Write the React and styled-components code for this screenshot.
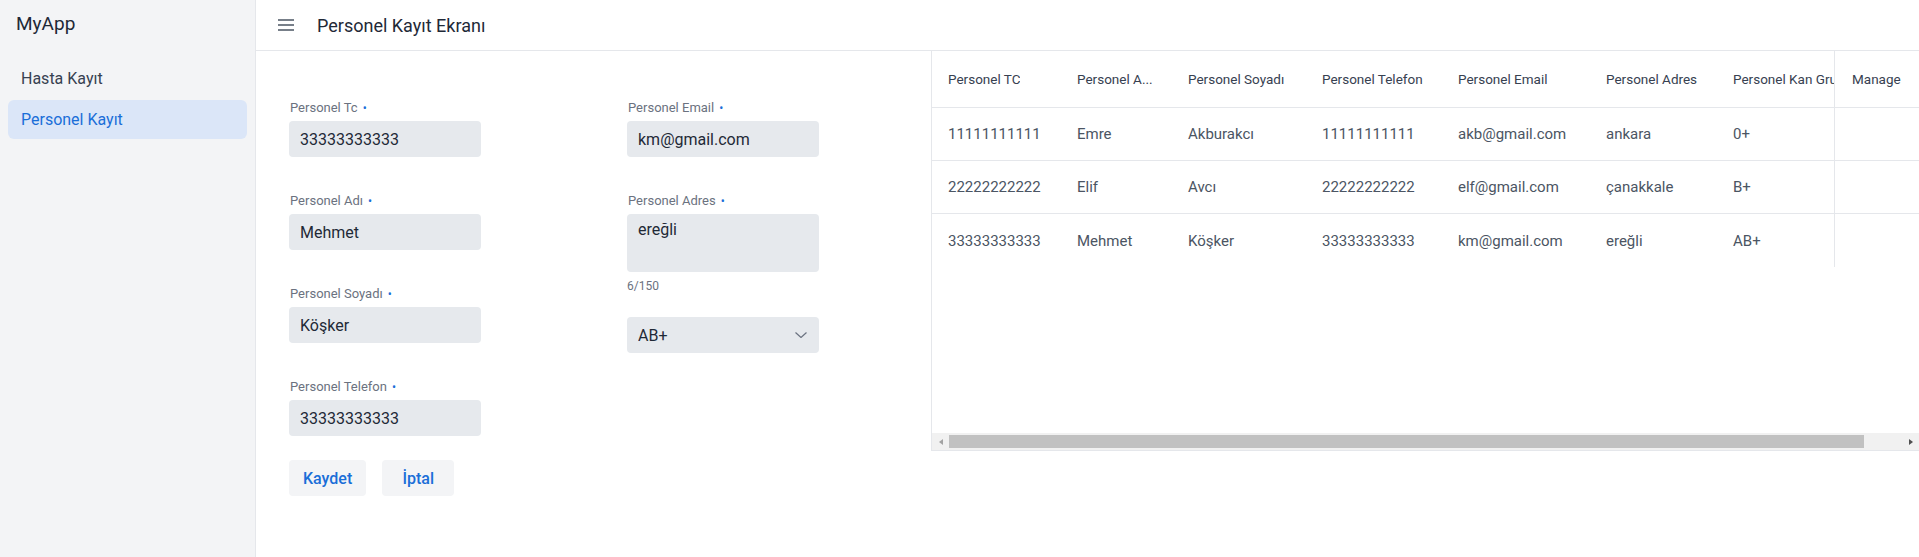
import styled, { createGlobalStyle } from "styled-components";

const GlobalStyle = createGlobalStyle`
  html, body {
    margin: 0;
    padding: 0;
    background: #fff;
  }
  body {
    font-family: Roboto, "Liberation Sans", sans-serif;
    color: #1f2937;
  }
  * {
    box-sizing: border-box;
  }
`;

const Layout = styled.div`
  display: flex;
  height: 100vh;
`;

const Sidebar = styled.aside`
  width: 256px;
  flex-shrink: 0;
  background: #f3f4f6;
  border-right: 1px solid #e5e7eb;
`;

const Brand = styled.div`
  height: 46px;
  display: flex;
  align-items: center;
  padding-left: 16px;
  font-size: 19px;
  color: #1f2937;
`;

const Nav = styled.nav`
  display: flex;
  flex-direction: column;
  gap: 2px;
  padding: 13px 8px;
`;

const NavItem = styled.a`
  height: 39px;
  display: flex;
  align-items: center;
  padding: 0 13px;
  border-radius: 6px;
  font-size: 16px;
  text-decoration: none;
  color: ${(p) => (p.$active ? "#1a6ed8" : "#374151")};
  background: ${(p) => (p.$active ? "#dbe6f8" : "transparent")};
`;

const Main = styled.div`
  flex: 1;
  display: flex;
  flex-direction: column;
  min-width: 0;
`;

const Header = styled.header`
  height: 51px;
  flex-shrink: 0;
  display: flex;
  align-items: center;
  gap: 23px;
  padding-left: 22px;
  border-bottom: 1px solid #e5e7eb;
`;

const Title = styled.h1`
  margin: 0;
  font-size: 18px;
  font-weight: 400;
  color: #1f2937;
`;

const Content = styled.div`
  flex: 1;
  display: flex;
  align-items: flex-start;
  min-height: 0;
`;

const FormArea = styled.form`
  width: 675px;
  flex-shrink: 0;
  padding: 48px 0 0 33px;
`;

const Columns = styled.div`
  display: grid;
  grid-template-columns: 192px 192px;
  column-gap: 146px;
  align-items: start;
`;

const Column = styled.div`
  display: flex;
  flex-direction: column;
`;

const Field = styled.div`
  display: flex;
  flex-direction: column;
  margin-bottom: ${(p) => p.$mb ?? 35}px;
`;

const Label = styled.label`
  display: block;
  height: 17px;
  font-size: 13px;
  line-height: 17px;
  color: #6b7280;
  margin-bottom: 5px;
  padding-left: 1px;
  overflow: hidden;
  &::after {
    content: "•";
    color: #1a6ed8;
    font-size: 12px;
    line-height: 0;
    margin-left: 5px;
  }
`;

const Input = styled.input`
  height: 36px;
  width: 192px;
  border: none;
  border-radius: 4px;
  background: #e6e9ed;
  padding: 0 11px;
  font-family: inherit;
  font-size: 16px;
  color: #1f2937;
  &:focus {
    outline: none;
  }
`;

const TextArea = styled.textarea`
  display: block;
  height: 58px;
  width: 192px;
  border: none;
  border-radius: 4px;
  background: #e6e9ed;
  padding: 6px 11px;
  font-family: inherit;
  font-size: 16px;
  color: #1f2937;
  resize: none;
  &:focus {
    outline: none;
  }
`;

const Counter = styled.div`
  margin-top: 7px;
  font-size: 12px;
  line-height: 14px;
  color: #6b7280;
`;

const SelectBox = styled.div`
  position: relative;
  width: 192px;
  height: 36px;
  margin-top: 24px;
  select {
    appearance: none;
    width: 100%;
    height: 100%;
    border: none;
    border-radius: 4px;
    background: #e6e9ed;
    padding: 0 11px;
    font-family: inherit;
    font-size: 16px;
    color: #1f2937;
  }
  svg {
    position: absolute;
    right: 12px;
    top: 15px;
    pointer-events: none;
  }
`;

const Actions = styled.div`
  display: flex;
  gap: 16px;
  margin-top: -11px;
`;

const Button = styled.button`
  height: 36px;
  min-width: 72px;
  padding: 0 14px;
  border: none;
  border-radius: 4px;
  background: #f3f4f6;
  color: #1a6ed8;
  font-family: inherit;
  font-size: 16px;
  font-weight: 500;
  cursor: pointer;
`;

const TableWrap = styled.div`
  flex: 1;
  min-width: 0;
  height: 400px;
  display: flex;
  flex-direction: column;
  border-left: 1px solid #e5e7eb;
  border-bottom: 1px solid #e5e7eb;
`;

const Viewport = styled.div`
  flex: 1;
  overflow: hidden;
`;

const ScrollBar = styled.div`
  height: 17px;
  flex-shrink: 0;
  display: flex;
  background: #f1f1f1;
`;

const ScrollArrow = styled.div`
  width: 17px;
  display: flex;
  align-items: center;
  justify-content: center;
  &::before {
    content: "";
    border-top: 3.5px solid transparent;
    border-bottom: 3.5px solid transparent;
    ${(p) =>
      p.$dir === "left"
        ? "border-right: 4px solid #a3a3a3;"
        : "border-left: 4px solid #505050;"}
  }
`;

const ScrollTrack = styled.div`
  flex: 1;
  padding: 2px 0;
`;

const ScrollThumb = styled.div`
  height: 100%;
  width: ${(p) => p.$size}%;
  background: #c1c1c1;
`;

const Table = styled.table`
  border-collapse: separate;
  border-spacing: 0;
  table-layout: fixed;
  width: 1033px;
`;

const Th = styled.th`
  height: 57px;
  padding: 0 16px;
  text-align: left;
  font-size: 13.5px;
  font-weight: 400;
  color: #374151;
  white-space: nowrap;
  overflow: hidden;
  border-bottom: 1px solid #e5e7eb;
`;

const HeadText = styled.span`
  display: flex;
  ${(p) =>
    p.$cut &&
    `
    &::after {
      content: "...";
    }
  `}
`;

const HeadClip = styled.span`
  display: block;
  overflow: hidden;
  max-width: ${(p) => (p.$cut ? `${p.$cut}px` : "none")};
`;

const Td = styled.td`
  height: 53px;
  padding: 0 16px;
  font-size: 15px;
  color: #4b5563;
  white-space: nowrap;
  overflow: hidden;
  border-bottom: 1px solid #e5e7eb;
  tr:last-child > & {
    border-bottom: none;
  }
`;

const StickyTh = styled(Th)`
  position: sticky;
  right: 0;
  background: #fff;
  border-left: 1px solid #e5e7eb;
  padding-left: 17px;
`;

const StickyTd = styled(Td)`
  position: sticky;
  right: 0;
  background: #fff;
  border-left: 1px solid #e5e7eb;
`;

const columns = [
  { key: "tc", title: "Personel TC", width: 129 },
  { key: "ad", title: "Personel Adı", width: 111, cut: 65 },
  { key: "soyad", title: "Personel Soyadı", width: 134 },
  { key: "tel", title: "Personel Telefon", width: 136 },
  { key: "email", title: "Personel Email", width: 148 },
  { key: "adres", title: "Personel Adres", width: 127 },
  { key: "kan", title: "Personel Kan Grubu", width: 163 },
];

const rows = [
  { tc: "11111111111", ad: "Emre", soyad: "Akburakcı", tel: "11111111111", email: "akb@gmail.com", adres: "ankara", kan: "0+" },
  { tc: "22222222222", ad: "Elif", soyad: "Avcı", tel: "22222222222", email: "elf@gmail.com", adres: "çanakkale", kan: "B+" },
  { tc: "33333333333", ad: "Mehmet", soyad: "Köşker", tel: "33333333333", email: "km@gmail.com", adres: "ereğli", kan: "AB+" },
];

function MenuIcon() {
  return (
    <svg width="16" height="12" viewBox="0 0 16 12" fill="none">
      <path d="M0 1h16M0 6h16M0 11h16" stroke="#4b5563" strokeWidth="1.4" />
    </svg>
  );
}

function ChevronDown() {
  return (
    <svg width="12" height="6" viewBox="0 0 12 6" fill="none">
      <path d="M0.5 0.5l5.5 5 5.5-5" stroke="#6b7280" strokeWidth="1.2" />
    </svg>
  );
}

export default function App() {
  return (
    <>
      <GlobalStyle />
      <Layout>
        <Sidebar>
          <Brand>MyApp</Brand>
          <Nav>
            <NavItem href="#">Hasta Kayıt</NavItem>
            <NavItem href="#" $active>
              Personel Kayıt
            </NavItem>
          </Nav>
        </Sidebar>

        <Main>
          <Header>
            <MenuIcon />
            <Title>Personel Kayıt Ekranı</Title>
          </Header>

          <Content>
            <FormArea onSubmit={(e) => e.preventDefault()}>
              <Columns>
                <Column>
                  <Field>
                    <Label>Personel Tc</Label>
                    <Input defaultValue="33333333333" />
                  </Field>
                  <Field>
                    <Label>Personel Adı</Label>
                    <Input defaultValue="Mehmet" />
                  </Field>
                  <Field>
                    <Label>Personel Soyadı</Label>
                    <Input defaultValue="Köşker" />
                  </Field>
                  <Field>
                    <Label>Personel Telefon</Label>
                    <Input defaultValue="33333333333" />
                  </Field>
                  <Actions>
                    <Button type="submit">Kaydet</Button>
                    <Button type="button">İptal</Button>
                  </Actions>
                </Column>
                <Column>
                  <Field>
                    <Label>Personel Email</Label>
                    <Input defaultValue="km@gmail.com" />
                  </Field>
                  <Field $mb={0}>
                    <Label>Personel Adres</Label>
                    <TextArea defaultValue="ereğli" />
                    <Counter>6/150</Counter>
                  </Field>
                  <SelectBox>
                    <select defaultValue="AB+">
                      <option>0+</option>
                      <option>0-</option>
                      <option>A+</option>
                      <option>A-</option>
                      <option>B+</option>
                      <option>B-</option>
                      <option>AB+</option>
                      <option>AB-</option>
                    </select>
                    <ChevronDown />
                  </SelectBox>
                </Column>
              </Columns>
            </FormArea>

            <TableWrap>
              <Viewport>
                <Table>
                  <colgroup>
                    {columns.map((c) => (
                      <col key={c.key} style={{ width: c.width }} />
                    ))}
                    <col style={{ width: 85 }} />
                  </colgroup>
                  <thead>
                    <tr>
                      {columns.map((c) => (
                        <Th key={c.key}>
                          <HeadText $cut={c.cut}>
                            <HeadClip $cut={c.cut}>{c.title}</HeadClip>
                          </HeadText>
                        </Th>
                      ))}
                      <StickyTh>Manage</StickyTh>
                    </tr>
                  </thead>
                  <tbody>
                    {rows.map((r) => (
                      <tr key={r.tc}>
                        {columns.map((c) => (
                          <Td key={c.key}>{r[c.key]}</Td>
                        ))}
                        <StickyTd />
                      </tr>
                    ))}
                  </tbody>
                </Table>
              </Viewport>
              <ScrollBar>
                <ScrollArrow $dir="left" />
                <ScrollTrack>
                  <ScrollThumb $size={96} />
                </ScrollTrack>
                <ScrollArrow $dir="right" />
              </ScrollBar>
            </TableWrap>
          </Content>
        </Main>
      </Layout>
    </>
  );
}
